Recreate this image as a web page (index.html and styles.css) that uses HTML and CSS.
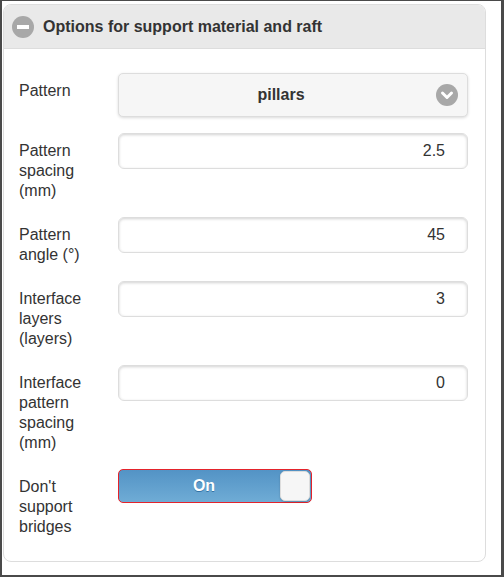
FILE: index.html
```html
<!DOCTYPE html>
<html>
<head>
<meta charset="utf-8">
<link rel="stylesheet" href="styles.css">
</head>
<body>
<div class="frame">
  <div class="card">
    <div class="card-head">
      <span class="minus-icon"><span class="bar"></span></span>
      <span class="title">Options for support material and raft</span>
    </div>
    <div class="card-body">
      <div class="row">
        <div class="label">Pattern</div>
        <div class="select">
          <span class="select-text">pillars</span>
          <span class="chev">
            <svg width="22" height="22" viewBox="0 0 22 22"><polyline points="6.5,9 11,13.5 15.5,9" fill="none" stroke="#fff" stroke-width="3" stroke-linecap="round" stroke-linejoin="round"/></svg>
          </span>
        </div>
      </div>
      <div class="row">
        <div class="label">Pattern<br>spacing<br>(mm)</div>
        <div class="input">2.5</div>
      </div>
      <div class="row">
        <div class="label">Pattern<br>angle (°)</div>
        <div class="input">45</div>
      </div>
      <div class="row">
        <div class="label">Interface<br>layers<br>(layers)</div>
        <div class="input">3</div>
      </div>
      <div class="row">
        <div class="label">Interface<br>pattern<br>spacing<br>(mm)</div>
        <div class="input">0</div>
      </div>
      <div class="row">
        <div class="label">Don't<br>support<br>bridges</div>
        <div class="toggle">
          <span class="toggle-text">On</span>
          <span class="handle"></span>
        </div>
      </div>
    </div>
  </div>
</div>
</body>
</html>
```
FILE: styles.css
```css
html, body {
  margin: 0;
  padding: 0;
  background: #fff;
}
.frame {
  width: 504px;
  height: 577px;
  box-sizing: border-box;
  border: 2px solid #4a4a4a;
  border-top-width: 1px;
  border-right-width: 3px;
  padding: 3px 0 0 1px;
  background: #fff;
  font-family: "Liberation Sans", Arial, sans-serif;
  color: #333;
}
.card {
  width: 483px;
  height: 558px;
  box-sizing: border-box;
  border: 1px solid #dddddd;
  border-radius: 8px;
  overflow: hidden;
  background: #fff;
}
.card-head {
  height: 44px;
  box-sizing: border-box;
  border-bottom: 1px solid #dddddd;
  background: #e9e9e9;
  display: flex;
  align-items: center;
  padding-left: 8px;
  gap: 9px;
}
.minus-icon {
  width: 22px;
  height: 22px;
  border-radius: 50%;
  background: #a8a8a8;
  display: flex;
  align-items: center;
  justify-content: center;
}
.minus-icon .bar {
  width: 12px;
  height: 4px;
  background: #fff;
}
.title {
  font-size: 16px;
  font-weight: bold;
  color: #333;
}
.card-body {
  padding: 24px 16px 0 15px;
}
.row {
  display: flex;
  align-items: flex-start;
  margin-bottom: 16px;
}
.label {
  width: 99px;
  flex: none;
  font-size: 16px;
  line-height: 20px;
  padding-top: 8px;
  color: #333;
}
.select {
  width: 350px;
  height: 44px;
  box-sizing: border-box;
  background: #f6f6f6;
  border: 1px solid #dddddd;
  border-radius: 5px;
  box-shadow: 0 1px 3px rgba(0,0,0,0.15);
  position: relative;
  display: flex;
  align-items: center;
  justify-content: center;
  padding: 0 40px 0 16px;
  font-size: 16px;
  font-weight: bold;
  color: #333;
}
.chev {
  position: absolute;
  right: 9px;
  top: 10px;
  width: 22px;
  height: 22px;
  border-radius: 50%;
  background: #a8a8a8;
  display: flex;
}
.input {
  width: 350px;
  height: 36px;
  box-sizing: border-box;
  border: 1px solid #dddddd;
  border-radius: 6px;
  box-shadow: inset 0 1px 3px rgba(0,0,0,0.18);
  background: #fff;
  display: flex;
  align-items: center;
  justify-content: flex-end;
  padding-right: 22px;
  font-size: 16px;
  color: #333;
}
.toggle {
  width: 194px;
  height: 34px;
  box-sizing: border-box;
  border: 1px solid #e4232b;
  border-radius: 5px;
  background: linear-gradient(#5393c5, #6facd5);
  display: flex;
  align-items: center;
  padding: 1px;
}
.toggle-text {
  flex: 1;
  text-align: center;
  padding-left: 8px;
  color: #fff;
  font-weight: bold;
  font-size: 16px;
  text-shadow: 0 1px 0 #3373a5;
}
.handle {
  width: 30px;
  height: 30px;
  box-sizing: border-box;
  background: #f6f6f6;
  border: 1px solid #dddddd;
  border-radius: 5px;
  box-shadow: 0 1px 2px rgba(0,0,0,0.2);
}
```
